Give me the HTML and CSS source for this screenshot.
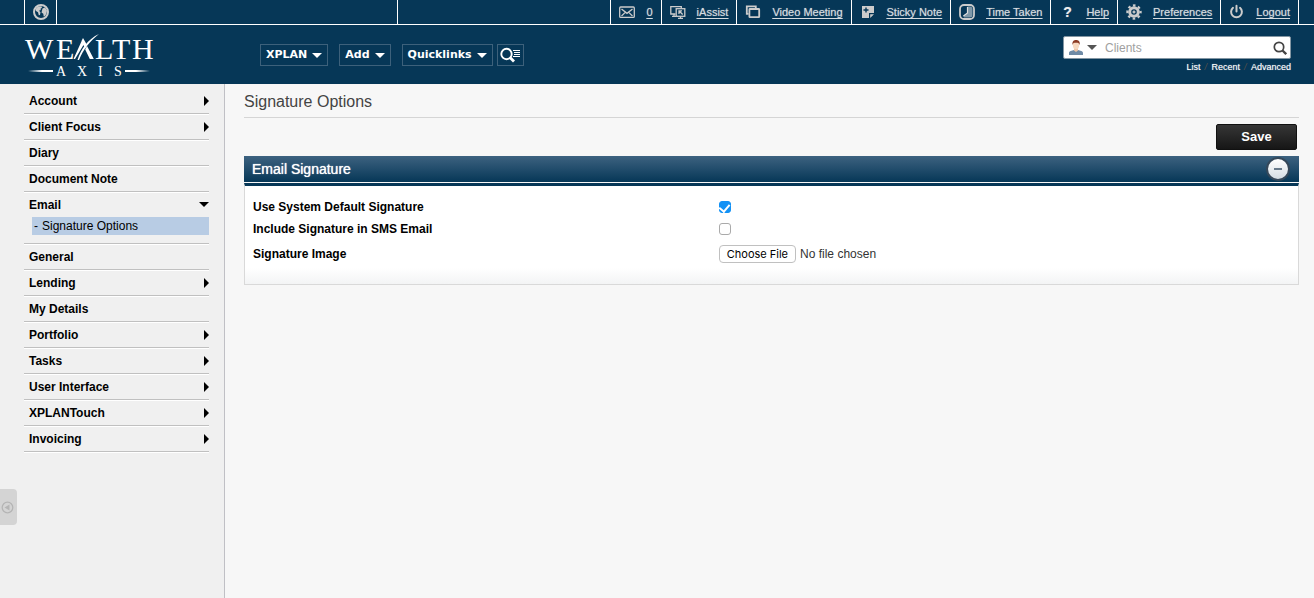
FILE: index.html
```html
<!DOCTYPE html>
<html lang="en">
<head>
<meta charset="utf-8">
<title>Signature Options</title>
<link rel="stylesheet" href="styles.css">
</head>
<body>
<header class="masthead">
  <div class="topbar">
    <a class="globe" href="#" aria-label="Site">
      <svg width="16" height="16" viewBox="0 0 16 16"><circle cx="8" cy="8" r="7" fill="none" stroke="#ccc" stroke-width="2"/><path d="M2.500 5 5 2.500l3.500-.3.500 1.500-1.500 1 .3 1.200-1.800.8 1.500 1.500-.5 2.800-1.200.2-.8-3L3 7zM9.500 4.500 12 3.500l2 3-.5 3-1.500 2.500-1.300.5-.4-2.700-1.800-1.200z" fill="#ccc"/></svg>
    </a>
    <div class="ticker"></div>
    <nav class="utilities">
      <a class="utility" href="#"><svg width="16" height="16" viewBox="0 0 16 16" fill="none" stroke="#ccc" stroke-width="1.300"><rect x=".7" y="3" width="14.600" height="10.400" rx="1"/><path d="M2.500 5 8 9.300 13.500 5M2.500 12l3.500-3.400M13.500 12 10 8.600"/></svg><span>0</span></a>
      <a class="utility" href="#"><svg width="16" height="16" viewBox="0 0 16 16" fill="none" stroke="#ccc" stroke-width="1.300"><path d="M5.500 10H.8V2.700h10.500V4M2 12.300h4M4 10v2"/><rect x="6.200" y="4.700" width="8.600" height="7.600"/><path d="M8 14.300h5M10.500 12.500v2M12.700 10.500 9.500 7.300M9 10V6.800h3"/></svg><span>iAssist</span></a>
      <a class="utility" href="#"><svg width="16" height="16" viewBox="0 0 16 16" fill="none" stroke="#ccc" stroke-width="1.800"><path d="M3.500 9.800H1.800V2.300h9V4"/><rect x="4.400" y="5" width="9.800" height="8.200" rx=".5"/></svg><span>Video Meeting</span></a>
      <a class="utility" href="#"><svg width="16" height="16" viewBox="0 0 16 16"><path d="M2 2h12v7H9v5H2zM10.200 10.200H14L10.200 14z" fill="#ccc"/><path d="M6 3.500v5M3.500 6h5" stroke="#063757" stroke-width="1.400"/></svg><span>Sticky Note</span></a>
      <a class="utility" href="#"><svg width="16" height="16" viewBox="0 0 16 16"><rect x="1" y="1" width="14" height="14" rx="4" fill="#063757" stroke="#ccc" stroke-width="1.800"/><path d="M8.500 2.500H11a2.500 2.500 0 0 1 2.500 2.500v6a2.500 2.500 0 0 1-2.500 2.500H5L4 11.500 8.500 9z" fill="#7f98a8"/><path d="M8.500 3v6L4.500 12" fill="none" stroke="#ddd" stroke-width="1.200"/></svg><span>Time Taken</span></a>
      <a class="utility" href="#"><b class="question">?</b><span>Help</span></a>
      <a class="utility" href="#"><svg width="16" height="16" viewBox="0 0 16 16" fill="none" stroke="#ccc"><circle cx="8" cy="8" r="4.300" stroke-width="3"/><circle cx="8" cy="8" r="6.600" stroke-width="2.200" stroke-dasharray="2.600 2.584" stroke-dashoffset="1.300"/><circle cx="8" cy="8" r="1.100" fill="#ccc"/></svg><span>Preferences</span></a>
      <a class="utility" href="#"><svg width="16" height="16" viewBox="0 0 16 16" fill="none" stroke="#ccc" stroke-width="2" stroke-linecap="round"><path d="M4 3.800a5.400 5.400 0 1 0 7 0M7.500 1.800v5.700"/></svg><span>Logout</span></a>
    </nav>
  </div>
  <div class="brandbar">
    <a class="logo" href="#" aria-label="Wealth Axis">
      <svg width="131" height="46" viewBox="0 0 131 46" fill="#fff">
        <g class="logo-large"><text x="1" y="27">W</text><text x="32" y="27">E</text><text x="71" y="27">L</text><text x="88" y="27">T</text><text x="108" y="27">H</text></g>
        <path d="M49.500 27 59 6l2 4.500L51 27zM59 6l4 7-1.800 3.500L57.500 9zM61.200 17.500l1.800-3.500 6.800 13h-4z"/>
        <path d="M53.500 28C57 17 64 7 75 2 66 9 59.500 17 55 28z"/>
        <g class="logo-small"><text x="32" y="44">A</text><text x="53" y="44">X</text><text x="74" y="44">I</text><text x="90" y="44">S</text></g>
        <path d="M4 39 18 38h11v2H18zM101 38h11l14 1-14 1h-11z"/>
      </svg>
    </a>
    <nav class="menus">
      <button class="menu" type="button">XPLAN <i class="caret"></i></button>
      <button class="menu" type="button">Add <i class="caret"></i></button>
      <button class="menu menu-joined" type="button">Quicklinks <i class="caret"></i></button>
      <button class="menu menu-icon" type="button" aria-label="Search list"><svg width="21" height="16" viewBox="0 0 21 16" fill="none" stroke="#fff"><circle cx="6.500" cy="7" r="5.200" stroke-width="1.900"/><path d="m10 10.500 4 4" stroke-width="2.800"/><path d="M13 3.500h7M14 5.500h6M14 7.500h6M13 9.500h7" stroke-width="1"/></svg></button>
    </nav>
    <form class="search">
      <div class="searchbox">
        <svg width="14" height="16" viewBox="0 0 14 16"><path d="M0 15v-2c0-2 3-2.500 5-3h4c2 .5 5 1 5 3v2z" fill="#6f8ba6"/><path d="M5 8h4v2.500L7 12l-2-1.500z" fill="#efc7a8"/><ellipse cx="7" cy="5" rx="3.200" ry="4.200" fill="#f7d9c0"/><path d="M3.500 5C3 1 5 0 7 0s4.500 1 3.500 5C10 3 9 2.800 7 2.800S4 3 3.500 5z" fill="#8c3b24"/></svg>
        <i class="caret caret-grey"></i>
        <input class="query" type="text" placeholder="Clients" aria-label="Clients">
        <button class="go" type="submit" aria-label="Search"><svg width="14" height="14" viewBox="0 0 14 14" fill="none" stroke="#444"><circle cx="6" cy="6" r="4.700" stroke-width="1.700"/><path d="m9.500 9.500 3.700 3.700" stroke-width="2.300"/></svg></button>
      </div>
      <div class="searchlinks"><a href="#">List</a><i>/</i><a href="#">Recent</a><i>/</i><a href="#">Advanced</a></div>
    </form>
  </div>
</header>
<div class="layout">
  <aside class="sidebar">
    <ul class="tree">
      <li><a class="more" href="#">Account</a></li>
      <li><a class="more" href="#">Client Focus</a></li>
      <li><a href="#">Diary</a></li>
      <li><a href="#">Document Note</a></li>
      <li class="open"><a class="expanded" href="#">Email</a><a class="current" href="#">Signature Options</a></li>
      <li><a href="#">General</a></li>
      <li><a class="more" href="#">Lending</a></li>
      <li><a href="#">My Details</a></li>
      <li><a class="more" href="#">Portfolio</a></li>
      <li><a class="more" href="#">Tasks</a></li>
      <li><a class="more" href="#">User Interface</a></li>
      <li><a class="more" href="#">XPLANTouch</a></li>
      <li><a class="more" href="#">Invoicing</a></li>
    </ul>
    <button class="drawer" type="button" aria-label="Collapse sidebar"><svg width="13" height="13" viewBox="0 0 13 13"><circle cx="6.500" cy="6.500" r="5.300" fill="none" stroke="#b5b5b5" stroke-width="1.300"/><path d="M8.500 3.500v6l-5-3z" fill="#b5b5b5"/></svg></button>
  </aside>
  <main class="content">
    <h1 class="title">Signature Options</h1>
    <form class="settings">
      <div class="actions"><button class="save" type="button">Save</button></div>
      <section class="panel">
        <div class="panel-head">
          <h2>Email Signature</h2>
          <button class="toggle" type="button" aria-label="Collapse section"></button>
        </div>
        <div class="panel-body">
          <label for="use-default">Use System Default Signature</label>
          <input class="check" id="use-default" type="checkbox" checked>
          <label for="sms">Include Signature in SMS Email</label>
          <input class="check" id="sms" type="checkbox">
          <label for="image">Signature Image</label>
          <input class="file" id="image" type="file">
        </div>
      </section>
    </form>
  </main>
</div>
</body>
</html>
```

FILE: styles.css
```css
* { box-sizing: border-box; }

body {
  margin: 0;
  min-height: 100vh;
  display: flex;
  flex-direction: column;
  background: #f7f7f7;
  color: #000;
  font: 12px/16px "Liberation Sans", Arial, sans-serif;
}

a { color: inherit; text-decoration: none; }
button { font: inherit; cursor: pointer; }
svg { display: block; flex: none; }

/* Masthead */
.masthead { background: #063757; color: #fff; }

.topbar {
  display: flex;
  height: 25px;
  padding: 0 15px 0 24px;
  border-bottom: 1px solid #fff;
}

.globe {
  width: 33px;
  padding: 4px 0 0 8px;
  border: solid #fff;
  border-width: 0 1px;
}

.ticker { width: 341px; border-right: 1px solid #fff; }

.utilities {
  display: flex;
  margin-left: auto;
  border-right: 1px solid #fff;
}

.utility {
  display: flex;
  align-items: center;
  gap: 11px;
  padding: 0 8px;
  border-left: 1px solid #fff;
  color: #d6dbdf;
  font-size: 11px;
  text-shadow: 0 0 1px #8fa3b1;
  white-space: nowrap;
}

.utility span { text-decoration: underline; text-underline-offset: 2px; }
.question { width: 16px; text-align: center; font-size: 14px; color: #eee; }

.brandbar {
  display: flex;
  align-items: flex-start;
  height: 59px;
  padding: 0 23px 0 24px;
}

.logo { width: 236px; padding-top: 7px; }
.logo-large { font: 30px "Liberation Serif", "Times New Roman", serif; }
.logo-small { font: 14px "Liberation Serif", "Times New Roman", serif; }

.menus { display: flex; gap: 11px; padding-top: 19px; }

.menu {
  display: flex;
  align-items: center;
  gap: 5px;
  height: 22px;
  padding: 0 5px;
  border: 1px solid #3d617b;
  background: none;
  color: #fff;
  font: bold 11px/20px "DejaVu Sans", Verdana, sans-serif;
}

.menu-joined { margin-right: -7px; }
.menu-icon { padding: 0 2px; }

.caret {
  border: solid transparent;
  border-width: 5px 5px 0;
  border-top-color: #fff;
}

.caret-grey { border-top-color: #555; }

.search { margin-left: auto; padding-top: 11px; }

.searchbox {
  display: flex;
  align-items: center;
  gap: 4px;
  width: 228px;
  height: 23px;
  padding: 0 3px 0 5px;
  border: 1px solid #8396a3;
  border-radius: 2px;
  background: #fff;
}

.query {
  flex: 1;
  min-width: 0;
  padding: 0 4px;
  border: 0;
  background: none;
  font: inherit;
  outline: 0;
}

.query::placeholder { color: #a0a0a0; opacity: 1; }
.go { padding: 0; border: 0; background: none; }

.searchlinks {
  display: flex;
  justify-content: flex-end;
  gap: 4px;
  font-size: 9px;
  text-shadow: 0 0 1px #8fa3b1;
}

.searchlinks i { width: 3px; color: #5a5048; text-shadow: none; }

/* Sidebar */
.layout { display: flex; flex: 1; }

.sidebar {
  width: 225px;
  padding: 4px 15px 0 24px;
  border-right: 1px solid #c0c0c5;
  background: #f0f0f0;
}

.tree { margin: 0; padding: 0; list-style: none; font-weight: bold; }

.tree li {
  border-bottom: 1px solid #c0c0c0;
  box-shadow: 0 1px #fff;
}

.tree a {
  display: flex;
  align-items: center;
  justify-content: space-between;
  height: 25px;
  padding-left: 5px;
}

.more::after {
  content: "";
  border: solid transparent;
  border-width: 5px 0 5px 5px;
  border-left-color: #000;
}

.expanded::after {
  content: "";
  border: solid transparent;
  border-width: 5px 5px 0;
  border-top-color: #000;
}

.tree .open { padding-bottom: 8px; }

.tree .current {
  justify-content: flex-start;
  gap: 4px;
  height: 18px;
  margin-left: 8px;
  padding-left: 2px;
  background: #b8cce4;
  font-weight: normal;
}

.current::before { content: "-"; }

.drawer {
  position: fixed;
  left: 0;
  top: 489px;
  width: 17px;
  height: 36px;
  padding: 0 0 0 1px;
  border: 0;
  border-radius: 0 4px 4px 0;
  background: #d4d4d4;
}

/* Content */
.content { flex: 1; padding: 8px 15px 0 19px; }

.title {
  margin: 0;
  padding: 1px 0 6px;
  border-bottom: 1px solid #d5d5d5;
  color: #444;
  font-size: 16px;
  font-weight: normal;
  line-height: 18px;
}

.actions { display: flex; justify-content: flex-end; padding: 6px 2px; }

.save {
  width: 81px;
  height: 26px;
  border: 1px solid #111;
  border-radius: 2px;
  background: linear-gradient(#363636, #161616);
  color: #fff;
  font-size: 13px;
  font-weight: bold;
}

.panel-head {
  display: flex;
  align-items: center;
  justify-content: space-between;
  height: 26px;
  padding: 0 9px 0 8px;
  background: linear-gradient(#3d6280, #063757);
  color: #fff;
}

.panel-head h2 {
  margin: 0;
  font-size: 14px;
  font-weight: normal;
  text-shadow: 0 0 1px #fff;
}

.toggle {
  display: flex;
  align-items: center;
  justify-content: center;
  width: 24px;
  height: 24px;
  padding: 0;
  border: 2px solid #35485a;
  border-radius: 50%;
  background: linear-gradient(#fff, #d5dde3);
}

.toggle::before { content: ""; width: 8px; height: 2px; background: #66798a; }

.panel-body {
  display: grid;
  grid-template-columns: 45% 1fr;
  align-items: center;
  row-gap: 6px;
  margin-top: 1px;
  padding: 13px 10px 19px 8px;
  border: 1px solid #d9d9d9;
  border-top: 3px solid #063757;
  background: linear-gradient(#fff calc(100% - 16px), #f3f4f5);
  font-weight: bold;
}

.check {
  appearance: none;
  width: 12px;
  height: 12px;
  margin: 0;
  border: 1px solid #aaa;
  border-radius: 3px;
  background: #fff;
}

.check:checked {
  display: grid;
  place-items: center;
  border-color: #1291f5;
  background: #1291f5;
}

.check:checked::before {
  content: "";
  width: 5px;
  height: 8px;
  margin-bottom: 2px;
  border: solid #fff;
  border-width: 0 2px 2px 0;
  transform: rotate(40deg);
}

.file { padding: 2px 0; color: #333; font: 12px/16px "Liberation Sans", Arial, sans-serif; }

.file::file-selector-button {
  height: 18px;
  margin: 0 4px 0 0;
  padding: 0 7px;
  border: 1px solid #c0c0c0;
  border-radius: 4px;
  background: #fff;
  color: #000;
  font: 11px/16px Inter, sans-serif;
}
```
